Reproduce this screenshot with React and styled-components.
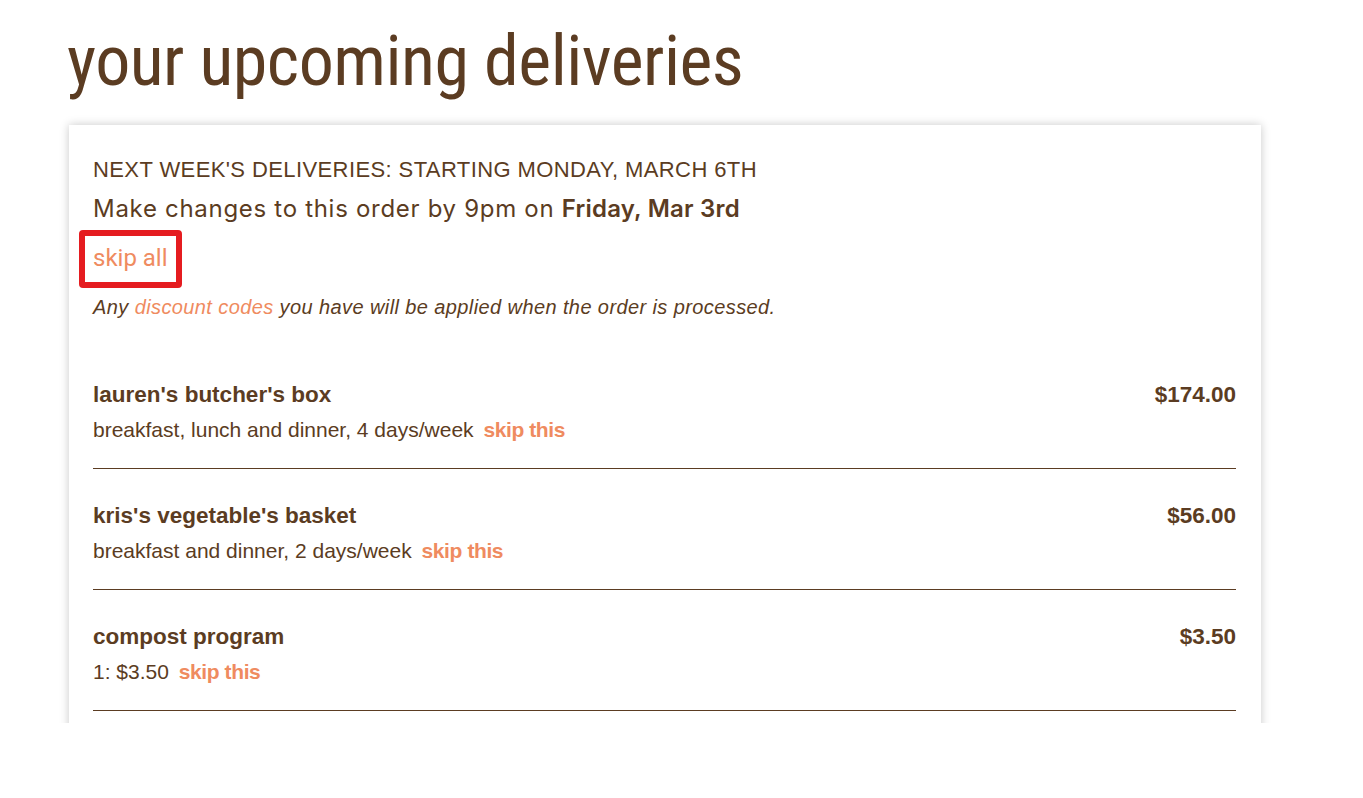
import React from "react";
import styled, { createGlobalStyle } from "styled-components";

const brown = "#5b3c22";
const orange = "#ef8b60";

const GlobalStyle = createGlobalStyle`
  body {
    margin: 0;
    background: #fff;
    font-family: "Liberation Sans", Roboto, sans-serif;
    color: ${brown};
  }
`;

const Page = styled.div`
  height: 723px;
  overflow: hidden;
  padding: 0 102px 0 69px;
`;

const Title = styled.h1`
  margin: 0 0 0 -2px;
  padding-top: 21px;
  height: 125px;
  box-sizing: border-box;
  font-family: "Liberation Sans Narrow", "Roboto Condensed", Roboto, sans-serif;
  font-weight: 400;
  font-size: 70px;
  line-height: 80px;
  letter-spacing: -0.5px;
`;

const Card = styled.section`
  background: #fff;
  box-shadow: 0 0 9px rgba(0, 0, 0, 0.22);
  padding: 31px 25px 40px 24px;
  min-height: 900px;
`;

const WeekHeading = styled.h2`
  margin: 0;
  font-weight: 400;
  font-size: 22px;
  line-height: 28px;
  letter-spacing: 0.4px;
`;

const Deadline = styled.p`
  margin: 10px 0 0;
  font-family: Inter, Lato, sans-serif;
  font-size: 24px;
  line-height: 30px;
  letter-spacing: 0.7px;

  strong {
    font-weight: 600;
    letter-spacing: 0.2px;
  }
`;

const SkipAllBox = styled.div`
  display: inline-block;
  margin: 6px 0 0 -14px;
  padding: 8px 8px 10px 8px;
  border: 6px solid #e51c20;
  border-radius: 4px;
`;

const SkipAll = styled.a`
  display: block;
  font-family: "Liberation Sans Narrow", Roboto, sans-serif;
  font-size: 24px;
  line-height: 28px;
  color: ${orange};
  text-decoration: none;
`;

const Discount = styled.p`
  margin: 7px 0 0;
  font-style: italic;
  font-size: 20px;
  line-height: 24px;
  letter-spacing: 0.4px;

  a {
    color: ${orange};
    text-decoration: none;
  }
`;

const Items = styled.ul`
  list-style: none;
  margin: 29px 0 0;
  padding: 0;
`;

const Item = styled.li`
  padding: 33px 0 26px;
  border-bottom: 1px solid ${brown};
`;

const ItemTop = styled.div`
  display: flex;
  justify-content: space-between;
  align-items: baseline;
`;

const ItemName = styled.span`
  font-weight: 700;
  font-size: 22.5px;
  line-height: 28px;
`;

const Price = styled.span`
  font-weight: 700;
  font-size: 22.5px;
  line-height: 28px;
`;

const Detail = styled.div`
  margin-top: 9px;
  font-size: 21px;
  line-height: 24px;
`;

const SkipThis = styled.a`
  margin-left: 4px;
  font-weight: 700;
  letter-spacing: -0.4px;
  color: ${orange};
  text-decoration: none;
`;

const items = [
  { name: "lauren's butcher's box", detail: "breakfast, lunch and dinner, 4 days/week", price: "$174.00" },
  { name: "kris's vegetable's basket", detail: "breakfast and dinner, 2 days/week", price: "$56.00" },
  { name: "compost program", detail: "1: $3.50", price: "$3.50" },
];

export default function App() {
  return (
    <>
      <GlobalStyle />
      <Page>
        <Title>your upcoming deliveries</Title>
        <Card>
          <WeekHeading>NEXT WEEK'S DELIVERIES: STARTING MONDAY, MARCH 6TH</WeekHeading>
          <Deadline>
            Make changes to this order by 9pm on <strong>Friday, Mar 3rd</strong>
          </Deadline>
          <SkipAllBox>
            <SkipAll href="#">skip all</SkipAll>
          </SkipAllBox>
          <Discount>
            Any <a href="#">discount codes</a> you have will be applied when the order is processed.
          </Discount>
          <Items>
            {items.map((item) => (
              <Item key={item.name}>
                <ItemTop>
                  <ItemName>{item.name}</ItemName>
                  <Price>{item.price}</Price>
                </ItemTop>
                <Detail>
                  {item.detail} <SkipThis href="#">skip this</SkipThis>
                </Detail>
              </Item>
            ))}
          </Items>
        </Card>
      </Page>
    </>
  );
}
